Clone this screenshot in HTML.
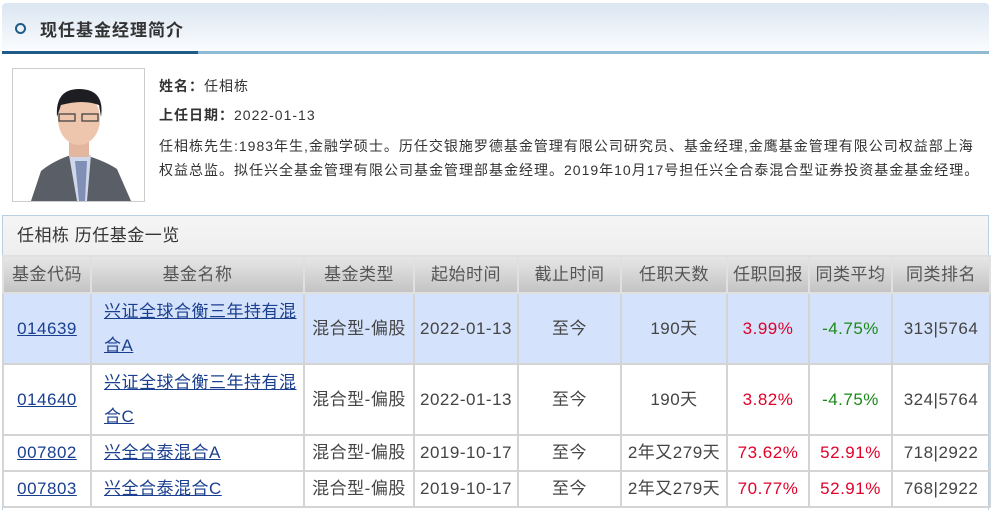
<!DOCTYPE html>
<html><head><meta charset="utf-8"><style>
body{margin:0;background:#fff;font-family:"Liberation Sans","Noto Sans CJK SC",sans-serif;color:#333;width:993px;height:510px;overflow:hidden;position:relative}
.hd{position:absolute;left:2px;top:3px;width:987px;height:49px;background:linear-gradient(#dbe6f2,#fbfcfe);border-radius:4px 4px 0 0}
.hdl{position:absolute;left:2px;top:51px;width:987px;height:3px;background:#8fbad6}
.hdl2{position:absolute;left:2px;top:51px;width:196px;height:3px;background:#1e5b86}
.circ{position:absolute;left:15px;top:23px;width:7px;height:7px;border:2.5px solid #1e5b86;border-radius:50%}
.ht{position:absolute;left:40px;top:20px;font-size:17px;letter-spacing:1px;font-weight:bold;color:#333;line-height:22px}
.photo{position:absolute;left:12px;top:68px;width:131px;height:132px;border:1px solid #ccc;background:#fff;overflow:hidden}
.info{position:absolute;left:159px;font-size:14px;color:#333;letter-spacing:1px;line-height:20px}
.tbox{position:absolute;left:2px;top:215px;width:985px;height:294px;border:1px solid #b8d0e4;border-bottom:none}
.tt{height:40px;background:linear-gradient(#f5f5f5,#eeeeee);font-size:17px;letter-spacing:0.5px;line-height:40px;padding-left:14px}
table{border-collapse:collapse;table-layout:fixed;width:987px;position:absolute;left:2px;top:255px;font-size:17px;letter-spacing:0.5px}
td,th{border:2px solid #d4d4d4;text-align:center;padding:0;line-height:20px;overflow:hidden}
th{height:35px;background:linear-gradient(#e6e6e6,#c4c4c4);font-weight:normal;color:#555;border-color:#e0e0e0}
td{color:#444}
a{color:#1a3f8f;text-decoration:underline}
.nm{text-align:left;padding-left:12px;line-height:34px}
.b td{background:#d4e2fb}
.r{color:#e0002a}.g{color:#1a8a1a}
</style></head><body>
<div class="hd"></div><div class="hdl"></div><div class="hdl2"></div>
<div class="circ"></div><div class="ht">现任基金经理简介</div>
<div class="photo"><svg width="131" height="132">
<path d="M18 132 L28 102 Q40 92 58 86 L72 86 Q92 92 104 100 L118 132Z" fill="#5a5e66"/>
<path d="M56 86 L64 132 L74 132 L78 86Z" fill="#cfd8ea"/>
<path d="M62 92 L66 132 L72 132 L74 92Z" fill="#7f8fb5"/>
<rect x="56" y="62" width="20" height="26" fill="#e3b79f"/>
<ellipse cx="66" cy="50" rx="21" ry="26" fill="#eec5ad"/>
<path d="M44 48 Q42 20 66 20 Q92 20 88 48 L86 36 Q70 30 48 36Z" fill="#1e1e22"/>
<rect x="46" y="45" width="16" height="7" fill="none" stroke="#444" stroke-width="1.3"/>
<rect x="69" y="45" width="16" height="7" fill="none" stroke="#444" stroke-width="1.3"/>
</svg></div>
<div class="info" style="top:76px"><b>姓名：</b>任相栋</div>
<div class="info" style="top:105px"><b>上任日期：</b>2022-01-13</div>
<div class="info" style="top:134px;width:830px;line-height:24px">任相栋先生:1983年生,金融学硕士。历任交银施罗德基金管理有限公司研究员、基金经理,金鹰基金管理有限公司权益部上海<br>权益总监。拟任兴全基金管理有限公司基金管理部基金经理。2019年10月17号担任兴全合泰混合型证券投资基金基金经理。</div>
<div class="tbox"><div class="tt">任相栋 历任基金一览</div></div>
<table>
<colgroup><col style="width:88px"><col style="width:213px"><col style="width:110px"><col style="width:104px"><col style="width:103px"><col style="width:106px"><col style="width:82px"><col style="width:83px"><col style="width:98px"></colgroup>
<tr><th>基金代码</th><th>基金名称</th><th>基金类型</th><th>起始时间</th><th>截止时间</th><th>任职天数</th><th>任职回报</th><th>同类平均</th><th>同类排名</th></tr>
<tr class="b" style="height:71px"><td><a>014639</a></td><td class="nm"><a>兴证全球合衡三年持有混合A</a></td><td>混合型-偏股</td><td>2022-01-13</td><td>至今</td><td>190天</td><td class="r">3.99%</td><td class="g">-4.75%</td><td>313|5764</td></tr>
<tr style="height:71px"><td><a>014640</a></td><td class="nm"><a>兴证全球合衡三年持有混合C</a></td><td>混合型-偏股</td><td>2022-01-13</td><td>至今</td><td>190天</td><td class="r">3.82%</td><td class="g">-4.75%</td><td>324|5764</td></tr>
<tr style="height:36px"><td><a>007802</a></td><td class="nm"><a>兴全合泰混合A</a></td><td>混合型-偏股</td><td>2019-10-17</td><td>至今</td><td>2年又279天</td><td class="r">73.62%</td><td class="r">52.91%</td><td>718|2922</td></tr>
<tr style="height:36px"><td><a>007803</a></td><td class="nm"><a>兴全合泰混合C</a></td><td>混合型-偏股</td><td>2019-10-17</td><td>至今</td><td>2年又279天</td><td class="r">70.77%</td><td class="r">52.91%</td><td>768|2922</td></tr>
</table>
</body></html>
